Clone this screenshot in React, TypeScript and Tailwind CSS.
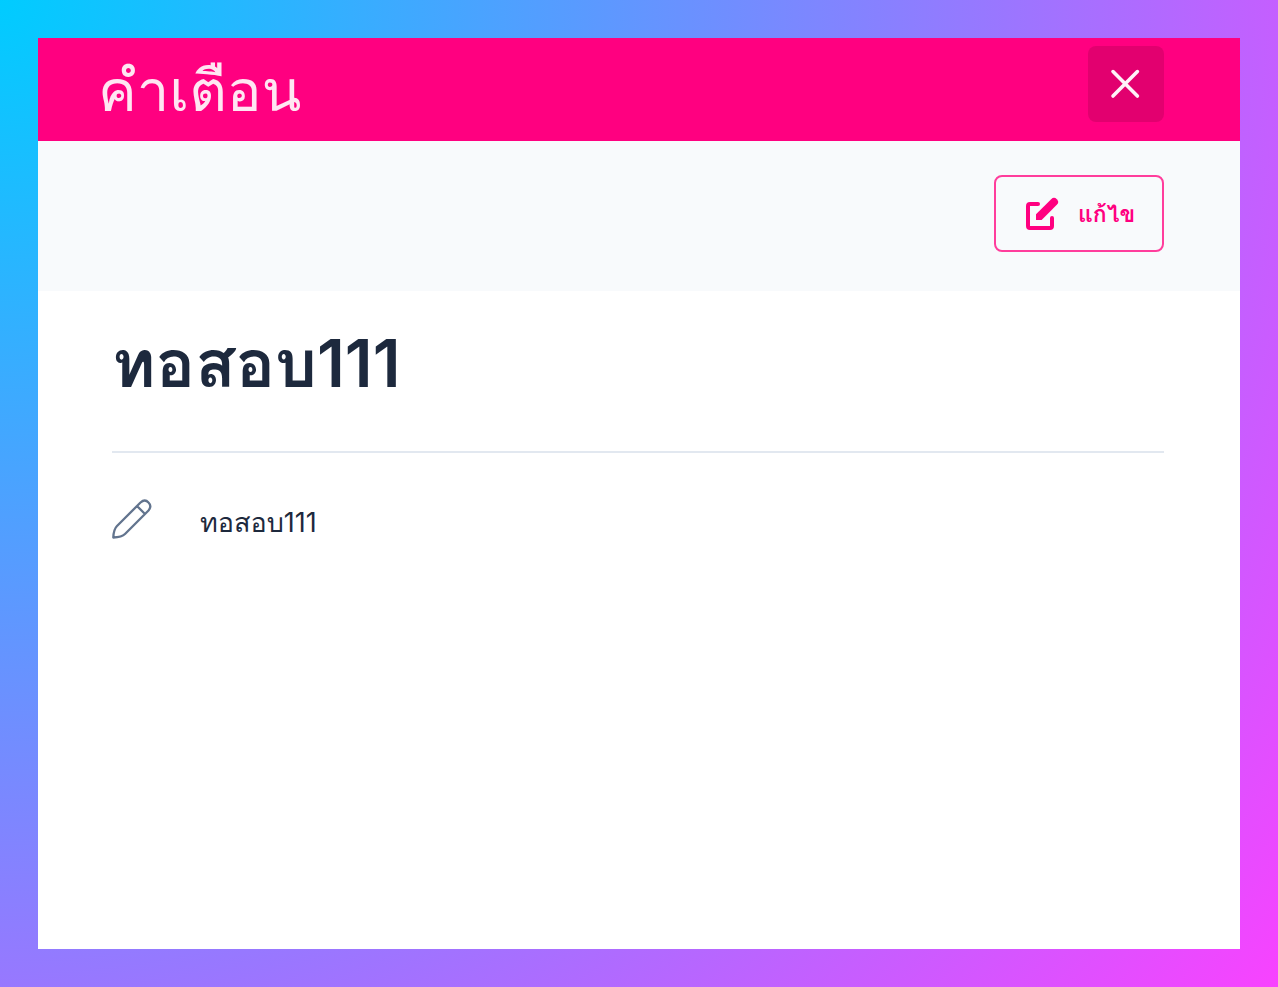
import React, { useState } from 'react';

const reminder = {
  title: 'ทอสอบ111',
  note: 'ทอสอบ111',
};

const CloseIcon = () => (
  <svg className="h-12 w-12" viewBox="0 0 24 24" fill="none" stroke="currentColor" strokeWidth="1.8" strokeLinecap="round" aria-hidden="true">
    <path d="M5.5 5.8l12.2 12.2M17.700 5.8l-12.200 12.200" />
  </svg>
);

const EditIcon = () => (
  <svg className="h-10 w-10" viewBox="0 0 20 20" fill="currentColor" aria-hidden="true">
    <path d="M17.414 2.586a2 2 0 00-2.828 0L7 10.172V13h2.828l7.586-7.586a2 2 0 000-2.828z" />
    <path
      fillRule="evenodd"
      clipRule="evenodd"
      d="M2 6a2 2 0 012-2h4a1 1 0 010 2H4v10h10v-4a1 1 0 112 0v4a2 2 0 01-2 2H4a2 2 0 01-2-2V6z"
    />
  </svg>
);

const PencilIcon = () => (
  <svg className="h-10 w-10" viewBox="0 0 40 40" fill="none" stroke="currentColor" strokeWidth="2.3" strokeLinecap="round" strokeLinejoin="round" aria-hidden="true">
    <path d="M1.3 38.500C1.500 34 2.500 29.500 5 27L28.500 3.500C31.500.8 34 .8 36.500 3.500C39 6 39 8.500 36.500 11.500L13 35C10.500 37.500 6 38.300 1.300 38.500zM25 7L33 15" />
  </svg>
);

const App: React.FC = () => {
  const [isEditing, setIsEditing] = useState(false);
  const [note, setNote] = useState(reminder.note);

  return (
    <div className="flex min-h-screen bg-[radial-gradient(circle_at_top_left,#00ccff,#f842ff)] p-[38px] font-['Inter','Loma','Noto_Sans_Thai',sans-serif]">
      <div className="flex flex-1 flex-col bg-white">
        {/* Header */}
        <header className="flex items-start justify-between bg-[#ff0080] pt-2 pr-[76px] pb-[19px] pl-[60px]">
          <h2 className="pt-3 text-[58px] leading-[64px] text-white/90">คำเตือน</h2>
          <button
            type="button"
            aria-label="ปิด"
            className="flex h-[76px] w-[76px] items-center justify-center rounded-lg bg-[#e2006f] text-white/95"
          >
            <CloseIcon />
          </button>
        </header>

        {/* Toolbar */}
        <div className="flex justify-end bg-slate-50 pt-[34px] pr-[76px] pb-[39px]">
          <button
            type="button"
            onClick={() => setIsEditing(!isEditing)}
            className="flex h-[77px] w-[170px] items-center gap-4 rounded-lg border-2 border-[#ff3d9c] pl-[26px] text-[#ff0080]"
          >
            <EditIcon />
            <span className="text-[23px] leading-8 font-bold">แก้ไข</span>
          </button>
        </div>

        {/* Details */}
        <main className="pt-8 pr-[76px] pl-[74px]">
          <h1 className="border-b-2 border-slate-200 pb-12 text-[66px] leading-[80px] font-semibold text-slate-800">
            {reminder.title}
          </h1>
          <div className="flex items-start gap-12 pt-[46px] text-slate-800">
            <span className="text-slate-500">
              <PencilIcon />
            </span>
            {isEditing ? (
              <input
                aria-label="โน้ต"
                value={note}
                onChange={(e) => setNote(e.target.value)}
                className="flex-1 text-[27px] leading-12"
              />
            ) : (
              <p className="text-[27px] leading-12">{note}</p>
            )}
          </div>
        </main>
      </div>
    </div>
  );
};

export default App;
